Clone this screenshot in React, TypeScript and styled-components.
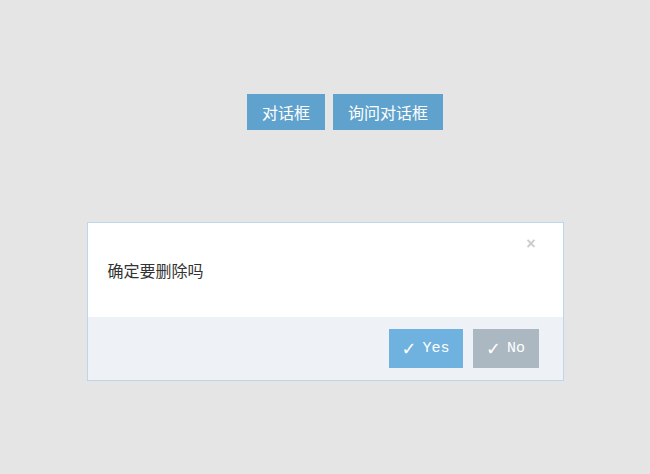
import { FC } from "react";
import styled, { createGlobalStyle } from "styled-components";

const GlobalStyle = createGlobalStyle`
  html, body {
    margin: 0;
    padding: 0;
    background: #e5e5e5;
    font-family: "Noto Sans CJK SC", "Liberation Sans", sans-serif;
  }
`;

const Page = styled.div`
  display: flex;
  flex-direction: column;
  width: 650px;
  height: 474px;
  padding-top: 94px;
  box-sizing: border-box;
`;

const Toolbar = styled.div`
  display: flex;
  gap: 8px;
  padding-left: 247px;
`;

const TopButton = styled.button`
  height: 36px;
  padding: 0 15px;
  border: none;
  background: #5fa2cd;
  color: #ffffff;
  font-family: "Noto Sans CJK SC", sans-serif;
  font-size: 16px;
  line-height: 36px;
  cursor: pointer;
`;

const Dialog = styled.div`
  display: flex;
  flex-direction: column;
  width: 477px;
  margin: 92px auto 0;
  border: 1px solid #bdd6ec;
  box-sizing: border-box;
  background: #ffffff;
`;

const DialogBody = styled.div`
  position: relative;
  display: flex;
  align-items: center;
  height: 94px;
  padding-left: 20px;
  font-size: 16px;
  color: #333333;
`;

const CloseButton = styled.span`
  position: absolute;
  top: 12px;
  right: 27px;
  font-family: "Liberation Sans", sans-serif;
  font-weight: bold;
  font-size: 16px;
  color: #cccccc;
  cursor: pointer;
`;

const DialogFooter = styled.div`
  display: flex;
  justify-content: flex-end;
  gap: 10px;
  padding: 12px 24px 12px 0;
  background: #eef2f7;
`;

const ActionButton = styled.button<{ muted?: boolean }>`
  display: flex;
  align-items: center;
  justify-content: center;
  gap: 6px;
  height: 39px;
  width: ${(p) => (p.muted ? "66px" : "74px")};
  border: none;
  background: ${(p) => (p.muted ? "#abb7c1" : "#6fb2e0")};
  color: #ffffff;
  font-family: "Liberation Mono", monospace;
  font-size: 15px;
  cursor: pointer;
`;

const Check = styled.span`
  font-family: "DejaVu Sans", sans-serif;
  font-size: 18px;
  line-height: 1;
`;

const App: FC = () => {
  return (
    <>
      <GlobalStyle />
      <Page>
        <Toolbar>
          <TopButton>对话框</TopButton>
          <TopButton>询问对话框</TopButton>
        </Toolbar>
        <Dialog>
          <DialogBody>
            确定要删除吗
            <CloseButton>×</CloseButton>
          </DialogBody>
          <DialogFooter>
            <ActionButton>
              <Check>✓</Check>Yes
            </ActionButton>
            <ActionButton muted>
              <Check>✓</Check>No
            </ActionButton>
          </DialogFooter>
        </Dialog>
      </Page>
    </>
  );
};

export default App;
